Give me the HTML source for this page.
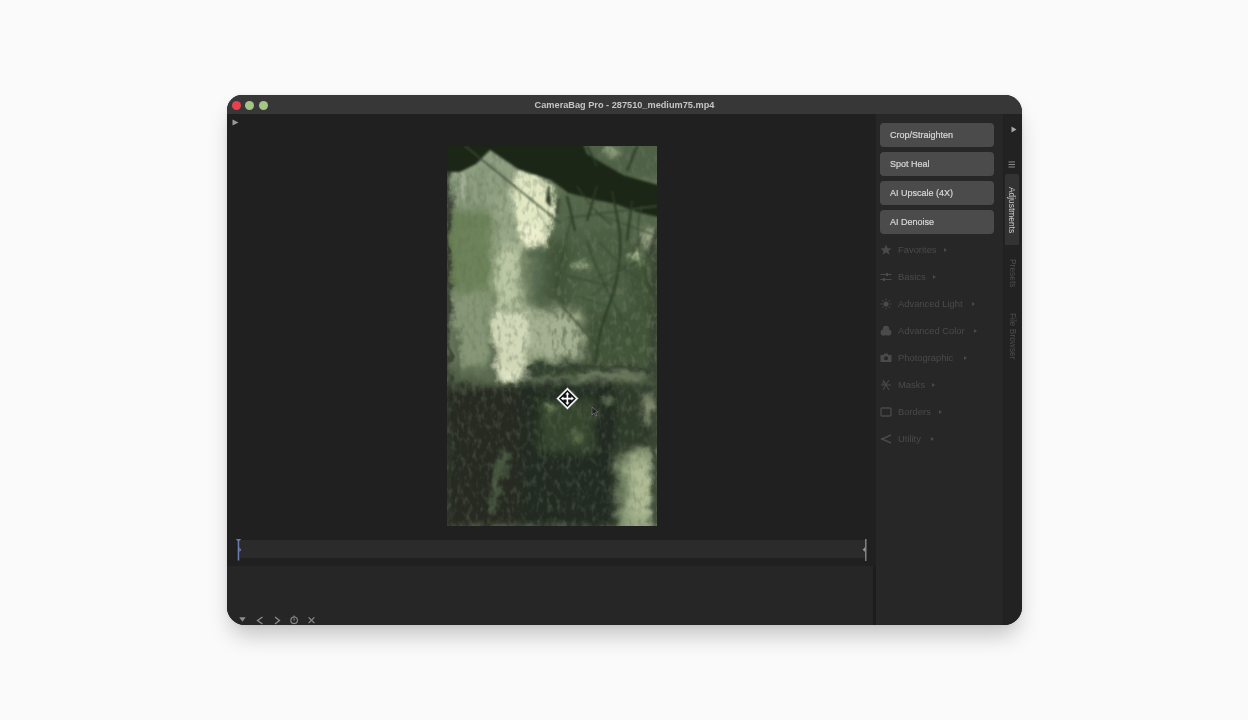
<!DOCTYPE html>
<html><head><meta charset="utf-8">
<style>
html,body{margin:0;padding:0;}
body{width:1248px;height:720px;background:#fafafa;position:relative;overflow:hidden;font-family:"Liberation Sans",sans-serif;}
.abs{position:absolute;}
#win{will-change:transform;left:227px;top:95px;width:795px;height:530px;border-radius:15px 17px 18px 18px;background:#202020;overflow:hidden;box-shadow:0 14px 22px -4px rgba(0,0,0,0.22),0 0 5px rgba(0,0,0,0.07);}
#title{left:0;top:0;width:795px;height:19px;background:#373737;}
#title .t{left:0;width:795px;top:4px;text-align:center;color:#c4c4c4;font-size:9.2px;font-weight:bold;line-height:12px;}
.dot{width:9px;height:9px;border-radius:50%;top:6px;}
#main{left:0;top:19px;width:649px;height:452px;background:#202020;}
#lower{left:0;top:471px;width:646px;height:59px;background:#262626;}
#lowline{left:646px;top:471px;width:3px;height:59px;background:#1c1c1c;}
#strip{left:13px;top:426px;width:627px;height:18px;background:#2b2b2b;}
#side{left:649px;top:19px;width:127px;height:511px;background:#272727;}
#tabs{left:777px;top:19px;width:18px;height:511px;background:#222222;}
.btn{left:4px;width:114px;height:24px;border-radius:4px;background:#4b4b4b;color:#d8d8d8;font-size:9px;line-height:24px;text-indent:10px;-webkit-text-stroke:0.2px #d8d8d8;}
.item{left:0;width:127px;height:14px;color:#4a4a4a;font-size:9.4px;line-height:14px;}
.item span.tx{position:absolute;left:22px;top:0;}
.item svg{position:absolute;left:4px;top:1px;}
.arr{position:absolute;top:4.5px;width:0;height:0;border-left:3.5px solid #4a4a4a;border-top:2.5px solid transparent;border-bottom:2.5px solid transparent;}
.vt{position:absolute;color:#cfcfcf;font-size:8.4px;white-space:nowrap;transform-origin:0 0;transform:rotate(90deg);line-height:10px;}
.ic{position:absolute;}
</style></head><body>
<div id="win" class="abs">
  <div id="title" class="abs">
    <div class="abs dot" style="left:5px;background:#e8404e"></div>
    <div class="abs dot" style="left:18px;background:#a6c486"></div>
    <div class="abs dot" style="left:32px;background:#a6c486"></div>
    <div class="abs t">CameraBag Pro - 287510_medium75.mp4</div>
  </div>
  <div id="main" class="abs">
    <svg class="ic" style="left:5px;top:5px" width="8" height="8" viewBox="0 0 8 8"><path d="M0.5 0.5 L6.5 3.5 L0.5 6.5Z" fill="#9a9a9a"/></svg>
    <!--PHOTO--><svg class="ic" style="left:220px;top:32px" width="210" height="380" viewBox="0 0 210 380">
<defs>
<filter id="b5" x="-10%" y="-10%" width="120%" height="120%"><feGaussianBlur stdDeviation="5"/></filter>
<filter id="b3" x="-10%" y="-10%" width="120%" height="120%"><feGaussianBlur stdDeviation="2.5"/></filter>
<filter id="b1" x="-10%" y="-10%" width="120%" height="120%"><feGaussianBlur stdDeviation="0.9"/></filter>
<filter id="b06" x="-10%" y="-10%" width="120%" height="120%"><feGaussianBlur stdDeviation="0.6"/></filter>
<filter id="disp" x="-5%" y="-5%" width="110%" height="110%"><feTurbulence type="fractalNoise" baseFrequency="0.07" numOctaves="3" seed="3" result="t"/><feDisplacementMap in="SourceGraphic" in2="t" scale="14" xChannelSelector="R" yChannelSelector="G" result="d"/><feGaussianBlur in="d" stdDeviation="0.7"/></filter>
<filter id="tx" x="0" y="0" width="100%" height="100%"><feTurbulence type="fractalNoise" baseFrequency="0.2 0.12" numOctaves="2" seed="9" result="n"/><feColorMatrix in="n" type="matrix" values="0 0 0 0 0.12  0 0 0 0 0.16  0 0 0 0 0.1  0 0 0 -3 1.6"/></filter>
<clipPath id="pc"><rect width="210" height="380"/></clipPath>
</defs>
<g clip-path="url(#pc)">
<rect width="210" height="380" fill="#6f8060"/>
<g filter="url(#disp)">
<g filter="url(#b5)">
  <rect x="-10" y="-10" width="85" height="80" fill="#8e9e80"/>
  <rect x="105" y="-10" width="115" height="45" fill="#506246"/>
  <rect x="99" y="45" width="115" height="50" fill="#52664a"/>
  <rect x="-10" y="63" width="58" height="83" fill="#6c8258"/>
  <rect x="-10" y="146" width="52" height="76" fill="#869676"/>
  <rect x="46" y="50" width="30" height="66" fill="#96a686"/><rect x="48" y="101" width="26" height="64" fill="#bcc8a4"/>
  <rect x="86" y="94" width="26" height="64" fill="#50644a"/>
  <rect x="99" y="95" width="115" height="127" fill="#435438"/>
  <rect x="125" y="82" width="57" height="83" fill="#4c5e42"/>
  <rect x="196" y="85" width="14" height="15" fill="#b0bc98"/>
  <rect x="74" y="165" width="60" height="48" fill="#a4b090"/>
  <rect x="-10" y="222" width="58" height="20" fill="#5a6a50"/>
  <rect x="-10" y="238" width="84" height="145" fill="#252c22"/>
  <rect x="74" y="235" width="96" height="148" fill="#242c20"/>
  <rect x="92" y="252" width="55" height="55" fill="#36442e"/>
  <rect x="168" y="235" width="47" height="72" fill="#2e3a2a"/>
  <rect x="199" y="252" width="11" height="20" fill="#a8b490"/>
  <rect x="178" y="306" width="36" height="80" fill="#98a882"/>
  <rect x="184" y="318" width="20" height="50" fill="#b0bc96"/>
</g>
<g filter="url(#b3)">
  <path d="M70 22 L101 34 L108 50 L100 101 L74 101 L66 60Z" fill="#e2e8c4"/><rect x="45" y="165" width="35" height="68" fill="#d0d8b8"/>
  <rect x="74" y="78" width="20" height="20" fill="#eef0d0"/>
  
  <path d="M54 306 L62 310 L46 370 L41 368Z" fill="#4c5c42"/>
  <rect x="56" y="226" width="15" height="11" fill="#e0e6c8"/>
  <rect x="76" y="218" width="140" height="12" fill="#33412d"/>
  <rect x="135" y="227" width="60" height="2" fill="#8e9c7c"/>
  <rect x="-3" y="24" width="7" height="360" fill="#2e342c"/>
  <rect x="204" y="80" width="9" height="300" fill="#3a4436"/>
  <path d="M10 180 L10 240 M45 195 L48 240" stroke="#4a5a40" stroke-width="5"/>
  <path d="M14 24 L16 50" stroke="#c8d0b8" stroke-width="3"/>
  <path d="M13 30 L14 80 M22 28 L23 70 M34 22 L35 60" stroke="#6a7a5c" stroke-width="1.6"/>
  <circle cx="100" cy="262" r="5" fill="#6e8258"/>
  <circle cx="130" cy="290" r="6" fill="#5a6e4a"/>
  <circle cx="160" cy="255" r="5" fill="#5c7050"/>
  <circle cx="165" cy="6" r="6" fill="#8a9c78"/>
  <circle cx="190" cy="110" r="6" fill="#a8b890"/>
  <circle cx="135" cy="120" r="6" fill="#a0b088"/>
</g>
</g>
<rect width="210" height="380" filter="url(#tx)" opacity="0.35"/>
<rect x="105" y="0" width="105" height="220" filter="url(#tx)" opacity="0.45"/>
<g filter="url(#b1)">
  <path d="M-5 -5 L135 -5 L140 8 L176 29 L215 40 L215 72 L190 66 L169 58 L149 54 L121 47 L104 34 L71 23 L43 4 L29 18 L13 26 L-5 26Z" fill="#1b2617"/>
  <path d="M18 0 L113 77" stroke="#3a4832" stroke-width="1.6"/>
  <path d="M102 40 L100 55 L104 60 M112 52 L110 68" stroke="#3a4832" stroke-width="2.5"/>
  <path d="M172 80 C 176 110, 170 140, 160 165 C 152 185, 150 205, 148 216" stroke="#2c3a26" stroke-width="2.2" fill="none"/>
  <path d="M177 122 L152 96 M177 122 L147 132 M177 122 L145 150 M177 122 L195 90 M177 122 L210 108 M177 122 L205 142 M177 122 L200 165 M160 160 L130 150 M165 140 L120 130 M120 72 L210 60 M150 68 L210 90" stroke="#3c4c34" stroke-width="1.3" fill="none"/>
  <path d="M150 175 L152 215 M160 170 L168 212" stroke="#3c4c34" stroke-width="1.5" fill="none"/>
  <path d="M150 40 L140 75 M165 45 L172 80 M185 55 L180 95 M120 50 L128 85 M140 0 L150 20 M190 0 L180 25" stroke="#2a3824" stroke-width="2" fill="none"/>
  <path d="M125 70 C 120 90, 112 120, 108 150 M140 95 C 150 130, 175 170, 190 205 M195 60 C 185 90, 195 120, 205 150 M115 160 L150 200 M130 40 C 140 55, 150 70, 165 78" stroke="#34442c" stroke-width="1.2" fill="none"/>
</g>
</g>
<g transform="translate(120.4 252.6)">
  <path d="M0 -11 L11 0 L0 11 L-11 0Z" fill="#f0f0f0" stroke="#888" stroke-width="0.6"/>
  <path d="M0 -8.5 L8.5 0 L0 8.5 L-8.5 0Z" fill="#111"/>
  <path d="M0 -6.5 L2 -4 H0.8 V-0.8 H4 V-2 L6.5 0 L4 2 V0.8 H0.8 V4 H2 L0 6.5 L-2 4 H-0.8 V0.8 H-4 V2 L-6.5 0 L-4 -2 V-0.8 H-0.8 V-4 H-2Z" fill="#fff"/>
</g>
<path d="M145 261 L145 269 L147 267 L149 270 L150 269.5 L148.5 266.5 L151 266Z" fill="#222" stroke="#999" stroke-width="0.5"/>
</svg><!--/PHOTO-->
    <div id="strip" class="abs"></div>
    <svg class="ic" style="left:7.5px;top:425px" width="8" height="24" viewBox="0 0 8 24"><path d="M0.8 0 H6.2 L4.3 2 V21.5 H2.7 V2Z" fill="#6e7ab4"/><path d="M4.3 8 L6.3 11 L4.3 13Z" fill="#6e7ab4"/></svg>
    <svg class="ic" style="left:634px;top:425px" width="6" height="24" viewBox="0 0 6 24"><rect x="4.2" y="0" width="1.2" height="22" fill="#959595"/><path d="M4.2 8 L1.6 10.8 L4.2 13Z" fill="#959595"/></svg>
  </div>
  <div id="lower" class="abs">
    <svg class="ic" style="left:10px;top:48px" width="100" height="12" viewBox="0 0 100 12">
      <path d="M2.2 3.3 H8.7 L5.45 7.8Z" fill="#8c8c8c"/>
      <path d="M25.5 3 L20.5 6.5 L25.5 10" fill="none" stroke="#8c8c8c" stroke-width="1.3"/>
      <path d="M38 3 L42.5 6.5 L38 10" fill="none" stroke="#8c8c8c" stroke-width="1.3"/>
      <circle cx="57.1" cy="6.3" r="3.3" fill="none" stroke="#8c8c8c" stroke-width="1.1"/>
      <path d="M57.1 1.5 V3.2 M57.1 4.5 V6.5" stroke="#8c8c8c" stroke-width="1.1"/>
      <path d="M71.6 3.3 L77.4 9.1 M77.4 3.3 L71.6 9.1" stroke="#8c8c8c" stroke-width="1.2"/>
    </svg>
  </div>
  <div id="lowline" class="abs"></div>
  <div id="side" class="abs">
    <div class="abs btn" style="top:9px">Crop/Straighten</div>
    <div class="abs btn" style="top:38px">Spot Heal</div>
    <div class="abs btn" style="top:67px">AI Upscale (4X)</div>
    <div class="abs btn" style="top:96px">AI Denoise</div>
    <div class="abs item" style="top:129px"><svg width="14" height="12" viewBox="0 0 14 12"><path d="M6 0.5 L7.6 4.2 L11.5 4.4 L8.5 6.9 L9.5 10.8 L6 8.6 L2.5 10.8 L3.5 6.9 L0.5 4.4 L4.4 4.2Z" fill="#4a4a4a"/></svg><span class="tx">Favorites</span><i class="arr" style="left:68px"></i></div>
    <div class="abs item" style="top:156px"><svg width="14" height="12" viewBox="0 0 14 12"><path d="M0.5 3.5 H11.5 M0.5 8.5 H11.5" stroke="#4a4a4a" stroke-width="1.2"/><rect x="6" y="2" width="2" height="3" fill="#4a4a4a"/><rect x="3" y="7" width="2" height="3" fill="#4a4a4a"/></svg><span class="tx">Basics</span><i class="arr" style="left:57px"></i></div>
    <div class="abs item" style="top:183px"><svg width="14" height="12" viewBox="0 0 14 12"><circle cx="6" cy="6" r="2.6" fill="#4a4a4a"/><path d="M6 0.5 V2.5 M6 9.5 V11.5 M0.5 6 H2.5 M9.5 6 H11.5 M2 2 L3.4 3.4 M8.6 8.6 L10 10 M2 10 L3.4 8.6 M8.6 3.4 L10 2" stroke="#4a4a4a" stroke-width="1"/></svg><span class="tx">Advanced Light</span><i class="arr" style="left:96px"></i></div>
    <div class="abs item" style="top:210px"><svg width="14" height="12" viewBox="0 0 14 12"><circle cx="6" cy="4" r="3.2" fill="#4a4a4a"/><circle cx="3.8" cy="7.6" r="3.2" fill="#4a4a4a"/><circle cx="8.2" cy="7.6" r="3.2" fill="#4a4a4a"/></svg><span class="tx">Advanced Color</span><i class="arr" style="left:98px"></i></div>
    <div class="abs item" style="top:237px"><svg width="14" height="12" viewBox="0 0 14 12"><path d="M0.5 3 H3.5 L4.5 1.5 H7.5 L8.5 3 H11.5 V10 H0.5Z" fill="#4a4a4a"/><circle cx="6" cy="6.3" r="2" fill="#272727"/></svg><span class="tx">Photographic</span><i class="arr" style="left:87.5px"></i></div>
    <div class="abs item" style="top:264px"><svg width="14" height="12" viewBox="0 0 14 12"><path d="M3 1 L9 11 M9 1 L3 11 M1 6 H11" stroke="#4a4a4a" stroke-width="1"/><circle cx="4" cy="4" r="1.4" fill="none" stroke="#4a4a4a" stroke-width="0.8"/></svg><span class="tx">Masks</span><i class="arr" style="left:56px"></i></div>
    <div class="abs item" style="top:291px"><svg width="14" height="12" viewBox="0 0 14 12"><rect x="1" y="2" width="10" height="8" rx="1" fill="none" stroke="#4a4a4a" stroke-width="1.3"/></svg><span class="tx">Borders</span><i class="arr" style="left:63px"></i></div>
    <div class="abs item" style="top:318px"><svg width="14" height="12" viewBox="0 0 14 12"><path d="M11 2 L2 6 L11 10" fill="none" stroke="#4a4a4a" stroke-width="1.4"/><circle cx="2.5" cy="6" r="1.3" fill="#4a4a4a"/></svg><span class="tx">Utility</span><i class="arr" style="left:55px"></i></div>
  </div>
  <div id="tabs" class="abs">
    <svg class="ic" style="left:7.2px;top:12px" width="7" height="8" viewBox="0 0 7 8"><path d="M0.5 0.5 L5.5 3.5 L0.5 6.5Z" fill="#a8a8a8"/></svg>
    <svg class="ic" style="left:4px;top:47px" width="8" height="8" viewBox="0 0 8 8"><path d="M0.5 1 H7 M0.5 3.5 H7 M0.5 6 H7" stroke="#8a8a8a" stroke-width="1"/></svg>
    <div class="abs" style="left:1px;top:60px;width:14px;height:71px;background:#333;border-radius:2px 2px 0 0"></div>
    <div class="vt" style="left:13px;top:73px">Adjustments</div>
    <div class="vt" style="left:14px;top:145px;color:#4c4c4c">Presets</div>
    <div class="vt" style="left:14px;top:198.5px;color:#4c4c4c">File Browser</div>
  </div>
</div>
</body></html>
